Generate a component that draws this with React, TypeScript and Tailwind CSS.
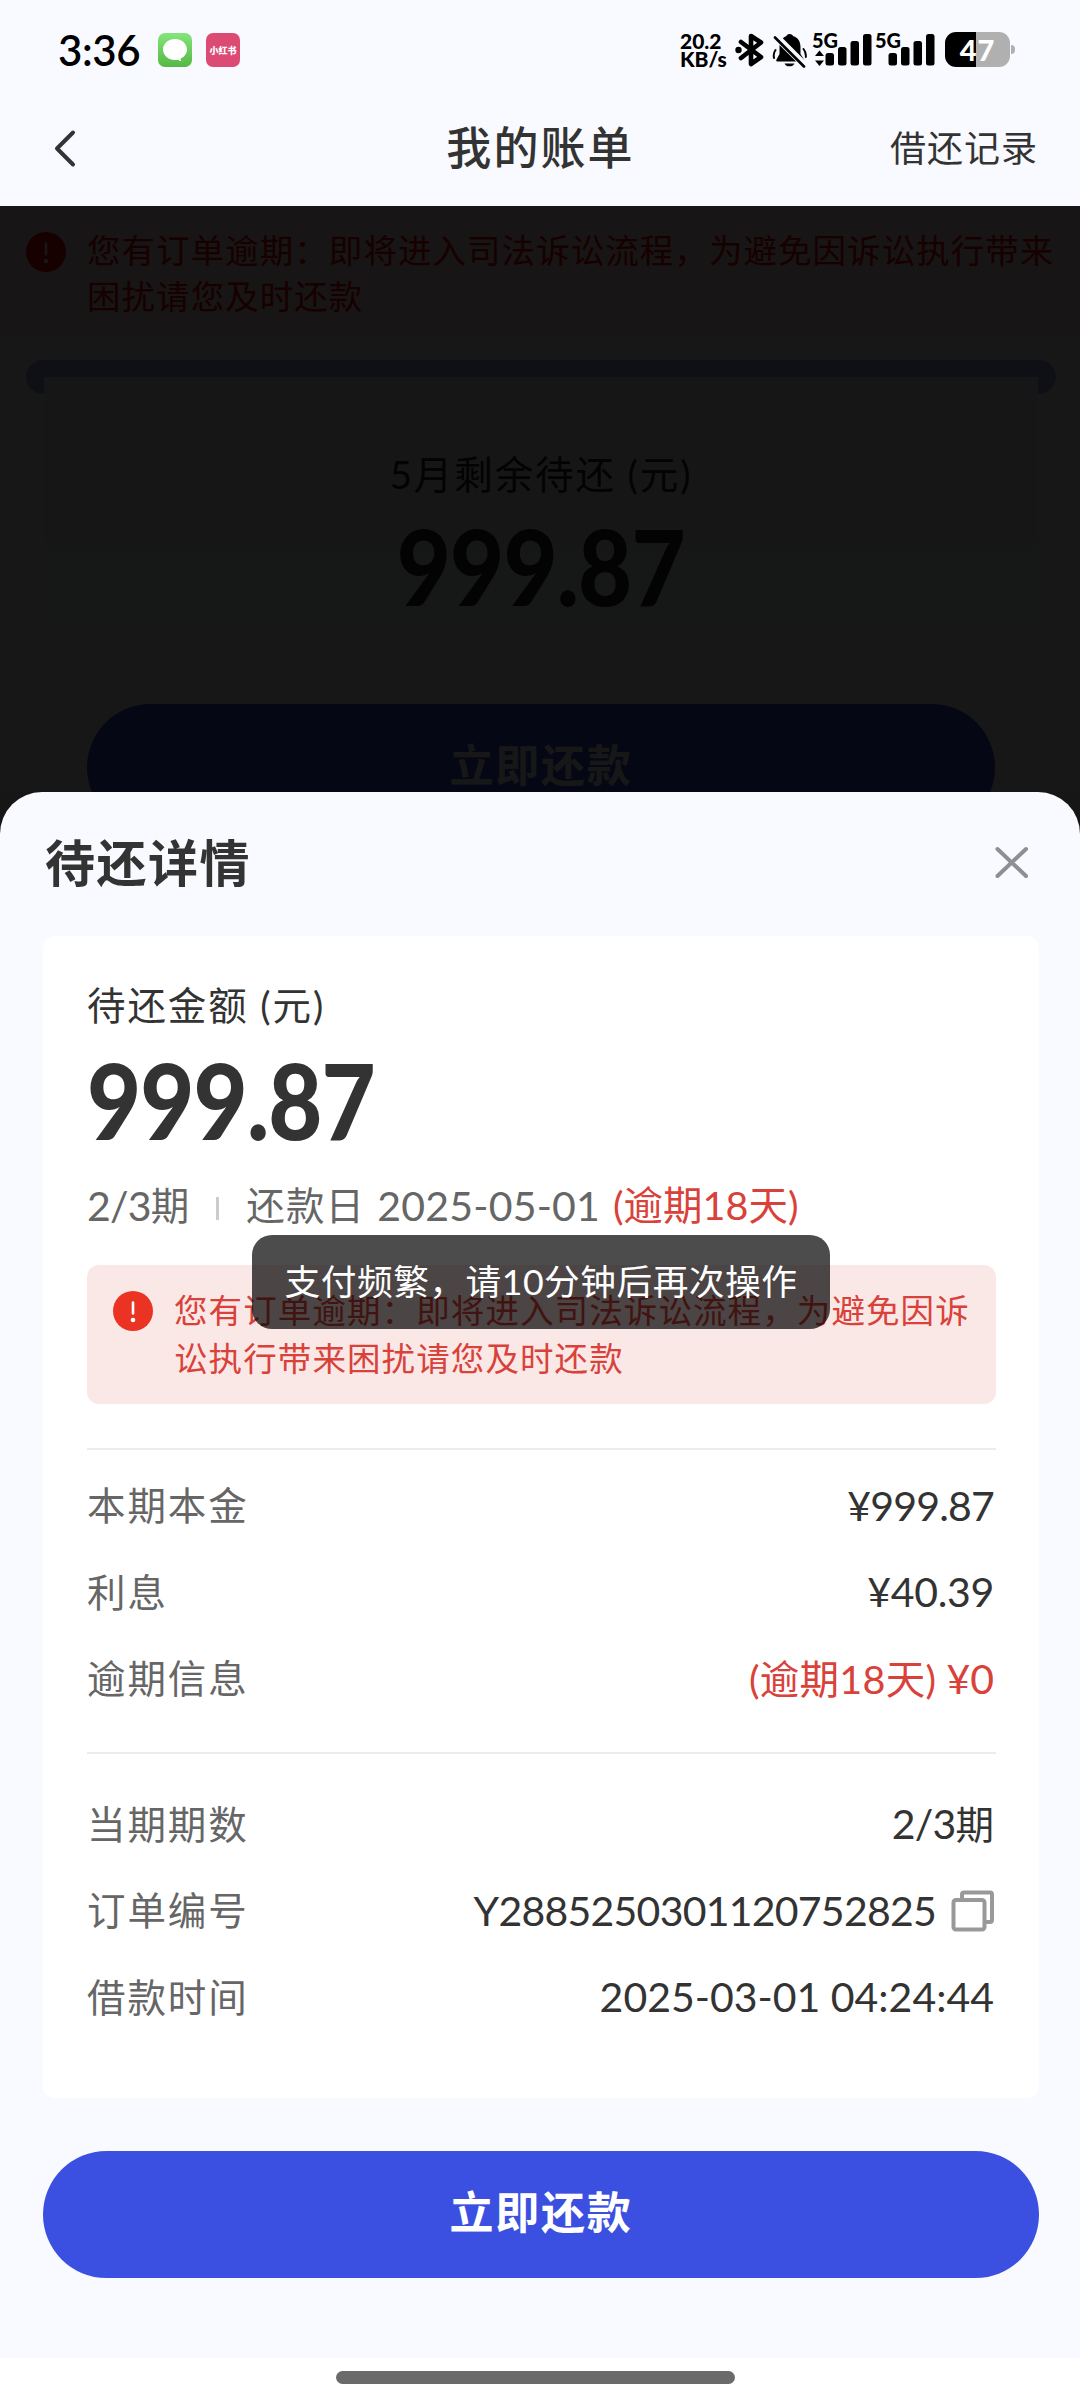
import type { ReactNode } from 'react';

const WARNING_TEXT = '您有订单逾期：即将进入司法诉讼流程，为避免因诉讼执行带来困扰请您及时还款';

function SignalBars({ data }: { data?: boolean }) {
  return (
    <svg width="60" height="34" viewBox="0 0 60 34" className="shrink-0 overflow-visible">
      <text x="-1" y="15" fontFamily="Lato" fontWeight="900" fontSize="20" textLength="26" lengthAdjust="spacingAndGlyphs">
        5G
      </text>
      {data && <path d="M6.500 17.500l4.500 5.500h-9zM6.500 33l4.500-5.500h-9z" />}
      <rect x="12.500" y="20" width="8.500" height="12.500" rx="2.500" />
      <rect x="25" y="14" width="8.500" height="18.500" rx="2.500" />
      <rect x="37.500" y="8" width="8.500" height="24.500" rx="2.500" />
      <rect x="50" y="1" width="8.500" height="31.500" rx="2.500" />
    </svg>
  );
}

function StatusBar() {
  return (
    <div className="flex h-[92px] items-start justify-between pt-8 pl-[58px] pr-[65px]">
      <div className="flex items-center">
        <span className="w-[100px] text-[42px] leading-9 font-semibold tracking-[-0.4px] text-black">3:36</span>
        <div className="flex size-[34px] items-center justify-center rounded-[7px] bg-linear-to-b from-[#84e57c] to-[#55b843]">
          <svg width="34" height="34" viewBox="0 0 34 34">
            <path d="M17 6C10.300 6 5 10.800 5 16.500c0 5.800 5.300 10.500 12 10.500 1 0 2 0 3-.3 1 .8 2.200 1.400 3.400 1.500-.7-.8-.8-1.700-.7-2.700C26.500 23.700 29 20.400 29 16.500 29 10.800 23.700 6 17 6z" fill="#fff" />
          </svg>
        </div>
        <div className="ml-[14px] flex size-[34px] items-center justify-center rounded-[7px] bg-[#dc4b74]">
          <span className="text-[9px] leading-none font-black whitespace-nowrap text-white">小红书</span>
        </div>
      </div>

      <div className="flex items-start text-black">
        <div className="mr-[5px] flex w-[50px] flex-col text-[21px] leading-[18px] font-black">
          <span>20.2</span>
          <span>KB/s</span>
        </div>
        <svg width="30" height="36" viewBox="0 0 30 36" fill="none" stroke="#000" strokeWidth="4.600" strokeLinejoin="round" strokeLinecap="round">
          <path d="M6 10l20 15-10 7V4l10 6.500L6 26" />
          <circle cx="3.500" cy="18" r="3.200" fill="#000" stroke="none" />
        </svg>
        <svg width="36" height="36" viewBox="0 0 36 36" className="ml-[7px]">
          <path d="M17.500 2c2.200 0 3.200 1 3.500 2 5.500 1.500 7.500 6 7.500 11v7l3.500 5.500c.5 1.200 0 2-1 2H5.500c-1.300 0-1.600-1-1-2L7.500 22v-7c0-5 2.500-9.500 7-11 .3-1 1-2 3-2z" />
          <path d="M12.500 31.500h10c-1 2-2.500 2.800-5 2.800s-4-.8-5-2.800z" />
          <path d="M3.500 18q-2.500 3.500-1.500 8M31.500 17q2.800 3.500 2.300 8" stroke="#000" strokeWidth="2" fill="none" strokeLinecap="round" />
          <path d="M3 3.500l31 31" stroke="#f9faff" strokeWidth="7" />
          <path d="M3 5.500l29 29" stroke="#000" strokeWidth="2.600" strokeLinecap="round" />
        </svg>
        <div className="ml-[5px] flex gap-[3px] pt-px">
          <SignalBars data />
          <SignalBars />
        </div>
        <div className="ml-[9px] flex items-center">
          <div className="flex h-[35px] w-[65px] items-center justify-center rounded-[11px] bg-[linear-gradient(90deg,#000_31px,#b0b0b1_31px)]">
            <span className="text-[29px] leading-none font-black tracking-[1px] text-white">47</span>
          </div>
          <div className="ml-px h-[9px] w-[4px] rounded-r-full bg-[#b0b0b1]" />
        </div>
      </div>
    </div>
  );
}

function WarningIcon({ fill = '#eb3323' }: { fill?: string }) {
  return (
    <svg width="40" height="40" viewBox="0 0 40 40" className="shrink-0">
      <circle cx="20" cy="20" r="20" fill={fill} />
      <path d="M20 11.500v11" stroke="#fff" strokeWidth="2.600" strokeLinecap="round" />
      <circle cx="20" cy="29" r="2.300" fill="#fff" />
    </svg>
  );
}

function Row({ label, children, danger }: { label: string; children: ReactNode; danger?: boolean }) {
  return (
    <div className="flex h-[86.5px] items-center justify-between pr-[2px]">
      <span className="text-[38.5px] leading-none tracking-[1.9px] text-[#666]">{label}</span>
      <div className={danger ? 'flex items-center text-[41px] leading-none text-[#d9423a]' : 'flex items-center text-[41px] leading-none text-[#333]'}>
        {children}
      </div>
    </div>
  );
}

// bill page behind the sheet, dimmed by the mask
function BillPage() {
  return (
    <div className="relative h-[586px] overflow-hidden bg-[#f9faff]">
      <div className="flex h-[131px] gap-[21px] bg-[#fae8e7] px-[26px] pt-[26px]">
        <WarningIcon fill="#ff0000" />
        <p className="-mt-[5px] w-[984px] shrink-0 text-[33.5px] leading-[46px] tracking-[1.05px] text-[#ff0000]">{WARNING_TEXT}</p>
      </div>
      <div className="mt-[23px] pr-[24px] pl-[26px]">
        <div className="h-[34px] rounded-full bg-[#aab3e6] px-[18px] pt-[17px]">
          <div className="flex h-[440px] flex-col items-center bg-linear-to-b from-[#eaf0ff] via-[#f4f7ff] to-[#fcfcff] to-75% pt-[74px] text-[#222]">
            <span className="text-[38.5px] leading-[46px] tracking-[1.9px]">5月剩余待还 (元)</span>
            <span className="mt-[20px] origin-center scale-x-[0.89] text-[105px] leading-[96px] font-black tracking-[-1px]">999.87</span>
            <div className="mt-[91px] flex h-[127px] w-[908px] shrink-0 items-center justify-center rounded-full bg-[#3b50e0] pb-[5px] text-[44px] font-bold tracking-[1.7px] text-white">
              立即还款
            </div>
          </div>
        </div>
      </div>
      <div className="absolute inset-0 bg-black/91" />
    </div>
  );
}

export default function App() {
  return (
    <div className="relative flex h-[2400px] w-[1080px] flex-col overflow-hidden bg-[#f9faff] font-['Lato','Noto_Sans_CJK_SC',sans-serif]">
      <StatusBar />
      <header className="flex h-[114px] items-center justify-between pr-[42px] pl-[44px] pb-[2px] text-[#333]">
        <div className="w-[147px]">
          <svg width="40" height="40" viewBox="0 0 40 40" fill="none" stroke="#333" strokeWidth="4" strokeLinecap="round" strokeLinejoin="round">
            <path d="M29 4.500L13 20.500l16 16" />
          </svg>
        </div>
        <h1 className="text-[45px] leading-none font-medium tracking-[2.1px]">我的账单</h1>
        <span className="text-[36px] leading-none tracking-[1px]">借还记录</span>
      </header>

      <div className="flex flex-1 flex-col bg-[#161617]">
        <BillPage />

        <section className="flex flex-1 flex-col rounded-t-[42px] bg-[#f9faff] pr-[41px] pl-[43px]">
          <div className="flex h-[144px] shrink-0 items-center justify-between pr-[8px] pb-[2px] pl-[2px]">
            <h2 className="text-[50px] leading-none font-bold tracking-[1.500px] text-[#333]">待还详情</h2>
            <svg width="38" height="38" viewBox="0 0 38 38" stroke="#8e8f92" strokeWidth="4" strokeLinecap="round">
              <path d="M4.500 5l28.500 27M33 5L4.500 32" />
            </svg>
          </div>

          <div className="h-[1162px] shrink-0 rounded-[12px] bg-white pr-[43px] pl-[44px]">
            <div className="pt-[46px] text-[38.5px] leading-[46px] tracking-[1.9px] text-[#333]">待还金额 (元)</div>
            <div className="mt-[23px] origin-left scale-x-[0.89] text-[105px] leading-[96px] font-black tracking-[-1px] text-[#333]">999.87</div>

            <div className="mt-[33px] flex h-[50px] items-center text-[41px] leading-none text-[#666]">
              <span className="tracking-[-0.8px]">2/3</span>
              <span className="text-[38.5px]">期</span>
              <span className="mt-[7px] ml-[27px] h-[23px] w-[3px] bg-[#ccc]" />
              <span className="ml-[27px] text-[38.5px] tracking-[1.2px]">还款日</span>
              <span className="ml-[12px] tracking-[0.2px]">2025-05-01</span>
              <span className="ml-[13px] text-[39.5px] text-[#d9423a]">(逾期18天)</span>
            </div>

            <div className="mt-[35px] flex h-[139px] gap-[21px] rounded-[12px] bg-[#fae8e7] pt-[26px] pl-[26px]">
              <WarningIcon />
              <p className="-mt-[5px] w-[808px] text-[33.5px] leading-[48px] tracking-[1.1px] text-[#d9423a]">{WARNING_TEXT}</p>
            </div>

            <div className="mt-[44px] border-t-2 border-[#ececec] pt-[12px] pb-[30px]">
              <Row label="本期本金">
                <span className="tracking-[-0.8px]">¥999.87</span>
              </Row>
              <Row label="利息">
                <span className="tracking-[-0.3px]">¥40.39</span>
              </Row>
              <Row label="逾期信息" danger>
                <span className="text-[39.5px] tracking-[0.3px]">(逾期18天)</span>
                <span className="ml-[10px]">¥0</span>
              </Row>
            </div>

            <div className="border-t-2 border-[#ececec] pt-[27px]">
              <Row label="当期期数">
                <span className="tracking-[-0.8px]">2/3</span>
                <span className="text-[38.5px]">期</span>
              </Row>
              <Row label="订单编号">
                <span className="tracking-[-0.75px]">Y2885250301120752825</span>
                <svg width="43" height="42" viewBox="0 0 43 42" fill="none" stroke="#999" strokeWidth="4" strokeLinejoin="round" className="mt-[2px] ml-[15px]">
                  <rect x="2.500" y="10" width="31" height="29.500" rx="2.500" />
                  <path d="M11 10V4.500a2 2 0 0 1 2-2h26a2 2 0 0 1 2 2V30a2 2 0 0 1-2 2h-5.500" />
                </svg>
              </Row>
              <Row label="借款时间">2025-03-01 04:24:44</Row>
            </div>
          </div>

          <button className="mt-[53px] h-[127px] shrink-0 rounded-full bg-[#3b50e0] pb-[5px] text-[44px] font-bold tracking-[1.7px] text-white">
            立即还款
          </button>
        </section>

        <div className="flex h-[42px] justify-center bg-white pt-[13px]">
          <div className="mr-[9px] h-[13px] w-[399px] rounded-full bg-[#6a6a6a]" />
        </div>
      </div>

      {/* toast */}
      <div className="absolute top-[1235px] left-[252px] flex h-[94px] w-[578px] items-center justify-center rounded-[20px] bg-black/70 text-[35.7px] leading-none tracking-[0.5px] whitespace-nowrap text-white">
        支付频繁，请10分钟后再次操作
      </div>
    </div>
  );
}
